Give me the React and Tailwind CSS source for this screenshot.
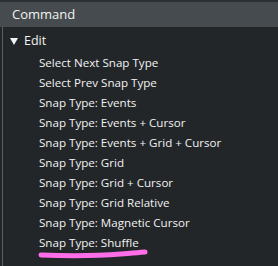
import React from 'react';

const items = [
  'Select Next Snap Type',
  'Select Prev Snap Type',
  'Snap Type: Events',
  'Snap Type: Events + Cursor',
  'Snap Type: Events + Grid + Cursor',
  'Snap Type: Grid',
  'Snap Type: Grid + Cursor',
  'Snap Type: Grid Relative',
  'Snap Type: Magnetic Cursor',
  'Snap Type: Shuffle',
];

const App = () => {
  return (
    <div
      className="w-[278px] h-[266px] bg-[#232629] text-[#f2f2f2] text-[11.6px] overflow-hidden flex flex-col"
      style={{ fontFamily: '"Open Sans", "Noto Sans", sans-serif' }}
    >
      {/* Header */}
      <div className="h-[2px] bg-[#2c3034]" />
      <div className="h-[25px] bg-[#464b4f] flex items-center pl-[12px] text-[13px]">
        Command
      </div>

      {/* Tree */}
      <div className="flex-1 border-l border-[#5b6064] ml-[2px] relative">
        <div className="h-[26px] flex items-center pl-[7px] pt-[2px]">
          <svg width="8" height="7" viewBox="0 0 8 7" className="mr-[6px]">
            <path d="M0 0 H8 L4 7 Z" fill="#f2f2f2" />
          </svg>
          <span className="text-[12.5px]">Edit</span>
        </div>
        <div className="flex flex-col pl-[36px]">
          {items.map((item) => (
            <div key={item} className="h-[20px] flex items-center">
              {item}
            </div>
          ))}
        </div>
        {/* highlighter stroke */}
        <svg className="absolute left-[33px] top-[220px]" width="116" height="12" viewBox="0 0 116 12">
          <path
            d="M5 8 C 30 9, 60 9, 85 7 S 104 5, 109 5"
            stroke="#ff6ee8"
            strokeWidth="5"
            strokeLinecap="round"
            fill="none"
          />
        </svg>
      </div>
    </div>
  );
};

export default App;
